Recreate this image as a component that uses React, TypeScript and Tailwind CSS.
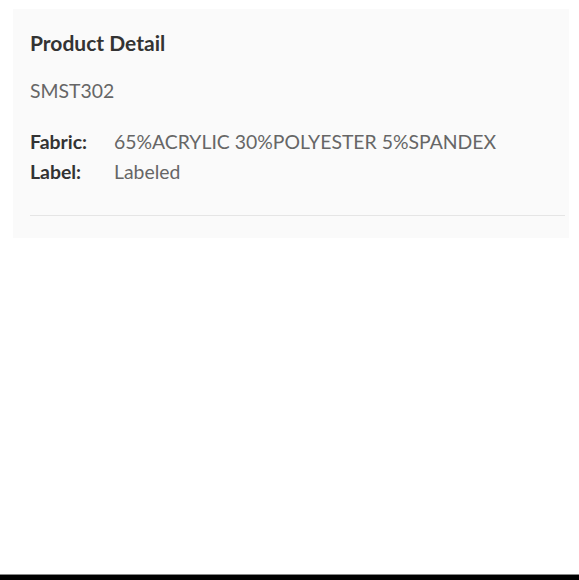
export default function App() {
  return (
    <div className="w-[579px] h-[580px] bg-white flex flex-col font-['Lato',sans-serif]">
      <div className="flex-1 pl-[13px] pr-[10px] pt-[9px]">
        <section className="bg-[#fafafa] pl-[17px] pr-[4px] pt-[19px] h-[229px]">
          <h2 className="text-[21px] font-bold text-[#333] leading-[30px]">
            Product Detail
          </h2>
          <p className="mt-[18px] text-[19.4px] text-[#666] leading-[30px]">SMST302</p>
          <div className="mt-[21px] grid grid-cols-[84px_1fr] text-[19.4px] leading-[30px]">
            <span className="font-bold text-[#333]">Fabric:</span>
            <span className="text-[#666]">65%ACRYLIC 30%POLYESTER 5%SPANDEX</span>
            <span className="font-bold text-[#333]">Label:</span>
            <span className="text-[#666]">Labeled</span>
          </div>
          <hr className="mt-[28px] border-t border-[#e5e5e5]" />
        </section>
      </div>
      <div className="h-[6px] bg-black border-t border-[#888]" />
    </div>
  );
}
